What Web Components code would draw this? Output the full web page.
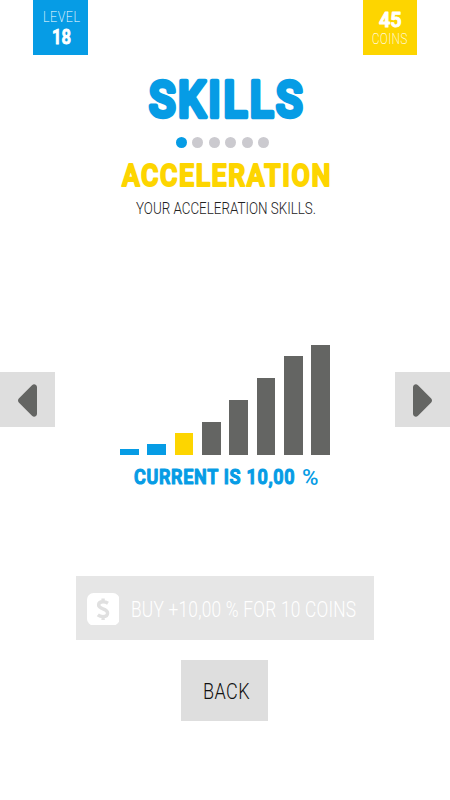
<!DOCTYPE html>
<html lang="en">
<head>
<meta charset="utf-8">
<title>Skills</title>
<style>
  body {
    margin: 0;
    background: #fff;
    font-family: Roboto, "Liberation Sans", sans-serif;
  }
</style>
</head>
<body>
<skills-screen></skills-screen>

<script>
const define = (name, html, setup) => {
  const template = document.createElement('template')
  template.innerHTML = html

  customElements.define(name, class extends HTMLElement {
    constructor() {
      super()
      this.attachShadow({ mode: 'open' })
      this.shadowRoot.appendChild(template.content.cloneNode(true))
    }

    connectedCallback() {
      if (setup) setup(this, this.shadowRoot)
    }
  })
}

// One line of capitals, as wide as "width" and with capitals as tall as "cap"
define('fit-text', `
<style>
  :host { display: block; flex: none; }
  svg { display: block; overflow: visible; }
  text { fill: currentColor; stroke: currentColor; stroke-linejoin: round; }
</style>
<svg><text x="0" lengthAdjust="spacingAndGlyphs"></text></svg>
`, (host, root) => {
  const width = Number(host.getAttribute('width'))
  const cap = Number(host.getAttribute('cap'))
  const stroke = Number(host.getAttribute('stroke') || 0)
  const spacing = Number(host.getAttribute('spacing') || 0)
  const svg = root.querySelector('svg')
  const text = root.querySelector('text')
  svg.setAttribute('width', width)
  svg.setAttribute('height', cap)
  text.textContent = host.getAttribute('text')
  text.setAttribute('y', cap - stroke / 2)
  text.setAttribute('font-size', (cap - stroke) / 0.711)
  text.setAttribute('font-weight', host.getAttribute('weight') || 300)
  text.setAttribute('stroke-width', stroke)
  text.setAttribute('letter-spacing', spacing)
  // the last letter carries its spacing too
  text.setAttribute('textLength', width + spacing)
})

define('stat-badge', `
<style>
  :host {
    display: flex;
    flex-direction: column;
    align-items: center;
    gap: 6px;
    box-sizing: border-box;
    width: 54.5px;
    height: 54.5px;
    padding-top: 11.5px;
    color: #fff;
    background: var(--badge);
  }
</style>
<slot></slot>
`)

define('page-dots', `
<style>
  :host { display: flex; gap: 5.4px; }
  i { width: 11px; height: 11px; border-radius: 50%; background: #cbcacf; }
  i:first-of-type { background: #069ce5; }
</style>
<i></i><i></i><i></i><i></i><i></i><i></i>
`)

define('level-chart', `
<style>
  :host {
    display: flex;
    align-items: flex-end;
    justify-content: space-between;
    width: 210px;
    height: 109.5px;
  }
  i { width: 18.6px; background: #646563; }
  .done { background: #069ce5; }
  .next { background: #fdd500; }
</style>
`, (host, root) => {
  const level = Number(host.getAttribute('level'))
  host.getAttribute('values').split(' ').forEach((value, index) => {
    const bar = document.createElement('i')
    bar.style.height = value + 'px'
    if (index < level) bar.className = 'done'
    if (index === level) bar.className = 'next'
    root.appendChild(bar)
  })
})

define('arrow-button', `
<style>
  :host {
    display: flex;
    align-items: center;
    justify-content: center;
    box-sizing: border-box;
    width: 54.7px;
    height: 54.7px;
    padding-top: 2px;
    background: #dedede;
  }
  :host([next]) svg { transform: scaleX(-1); }
  svg { display: block; }
</style>
<svg width="19" height="33" viewBox="0 0 19 33">
  <path d="M.8 14.5 14 1.2Q16 -.6 18 1Q19 1.8 19 3.2V29.8Q19 31.2 18 32Q16 33.6 14 31.8L.8 18.5Q-.8 16.5 .8 14.5Z" fill="#646563"/>
</svg>
`)

define('coin-icon', `
<style>
  :host { display: block; }
  svg { display: block; }
</style>
<svg width="32.5" height="32.5" viewBox="0 0 32.5 32.5">
  <rect width="32.5" height="32.5" rx="6.5" fill="#fff"/>
  <path d="M21 10.2Q18.8 8.8 16 8.8C12.8 8.8 11.6 10.3 11.6 12.1C11.6 16.8 20.6 14.8 20.6 20C20.6 22.6 18.7 23.6 16 23.6Q13 23.6 10.8 21.9M16.1 5.4V9M16.1 23.5V27" fill="none" stroke="#e0e0e0" stroke-width="3.4"/>
</svg>
`)

define('flat-button', `
<style>
  :host {
    display: flex;
    align-items: center;
    justify-content: center;
    background: #dedede;
    color: #111;
  }
  :host([disabled]) {
    background: #e6e6e6;
    color: #fff;
  }
</style>
<slot></slot>
`)

define('skills-screen', `
<style>
  :host {
    display: flex;
    flex-direction: column;
    align-items: center;
    width: 450px;
    height: 800px;
    overflow: hidden;
  }
  header {
    display: flex;
    justify-content: space-between;
    box-sizing: border-box;
    width: 100%;
    padding: 0 33px;
  }
  .level { --badge: #069ce5; gap: 6.5px; padding-top: 11px; }
  .coins { --badge: #fdd500; }
  .level fit-text { margin-left: 2px; }
  .title { margin: 24.5px 0 0 1px; color: #069ce5; }
  page-dots { margin: 17.5px 5px 0 0; }
  .skill { margin: 15px 0 0 1px; color: #fdd500; }
  .about { margin: 15px 0 0 2px; color: #222; }
  main {
    display: flex;
    align-items: flex-start;
    justify-content: space-between;
    width: 100%;
    margin-top: 131.5px;
  }
  arrow-button { margin-top: 27px; }
  .current { display: flex; gap: 7px; margin: 14px 0 0 2px; color: #069ce5; }
  .buy {
    box-sizing: border-box;
    width: 298px;
    height: 63.5px;
    margin-top: 91.5px;
    padding: 2px 7px 0 0;
    gap: 12px;
  }
  .back {
    box-sizing: border-box;
    width: 87.5px;
    height: 61px;
    margin: 20px 1px 0 0;
    padding: 1px 0 0 4px;
  }
</style>
<header>
  <stat-badge class="level">
    <fit-text text="LEVEL" width="37" cap="10.5" weight="200" spacing=".6"></fit-text>
    <fit-text text="18" width="19" cap="16" weight="600" stroke="1"></fit-text>
  </stat-badge>
  <stat-badge class="coins">
    <fit-text text="45" width="22.5" cap="15.5" weight="600" stroke="1"></fit-text>
    <fit-text text="COINS" width="35" cap="11" weight="100" spacing=".8" stroke=".15"></fit-text>
  </stat-badge>
</header>
<fit-text class="title" text="SKILLS" width="153" cap="40" weight="500" stroke="4.6" spacing="3"></fit-text>
<page-dots></page-dots>
<fit-text class="skill" text="ACCELERATION" width="208" cap="24" weight="600" stroke="2" spacing="1.8"></fit-text>
<fit-text class="about" text="YOUR ACCELERATION SKILLS." width="180" cap="12" weight="300"></fit-text>
<main>
  <arrow-button></arrow-button>
  <level-chart level="2" values="5.2 11 22 32.7 54.5 76.5 98.3 109.3"></level-chart>
  <arrow-button next></arrow-button>
</main>
<div class="current">
  <fit-text text="CURRENT IS 10,00" width="160.5" cap="16" weight="600" stroke="1.2" spacing=".8"></fit-text>
  <fit-text text="%" width="16.5" cap="16" weight="500"></fit-text>
</div>
<flat-button class="buy" disabled>
  <coin-icon></coin-icon>
  <fit-text text="BUY +10,00 % FOR 10 COINS" width="225" cap="16" weight="300" spacing=".3"></fit-text>
</flat-button>
<flat-button class="back">
  <fit-text text="BACK" width="46.5" cap="16" weight="300" spacing=".5"></fit-text>
</flat-button>
`)
</script>
</body>
</html>
